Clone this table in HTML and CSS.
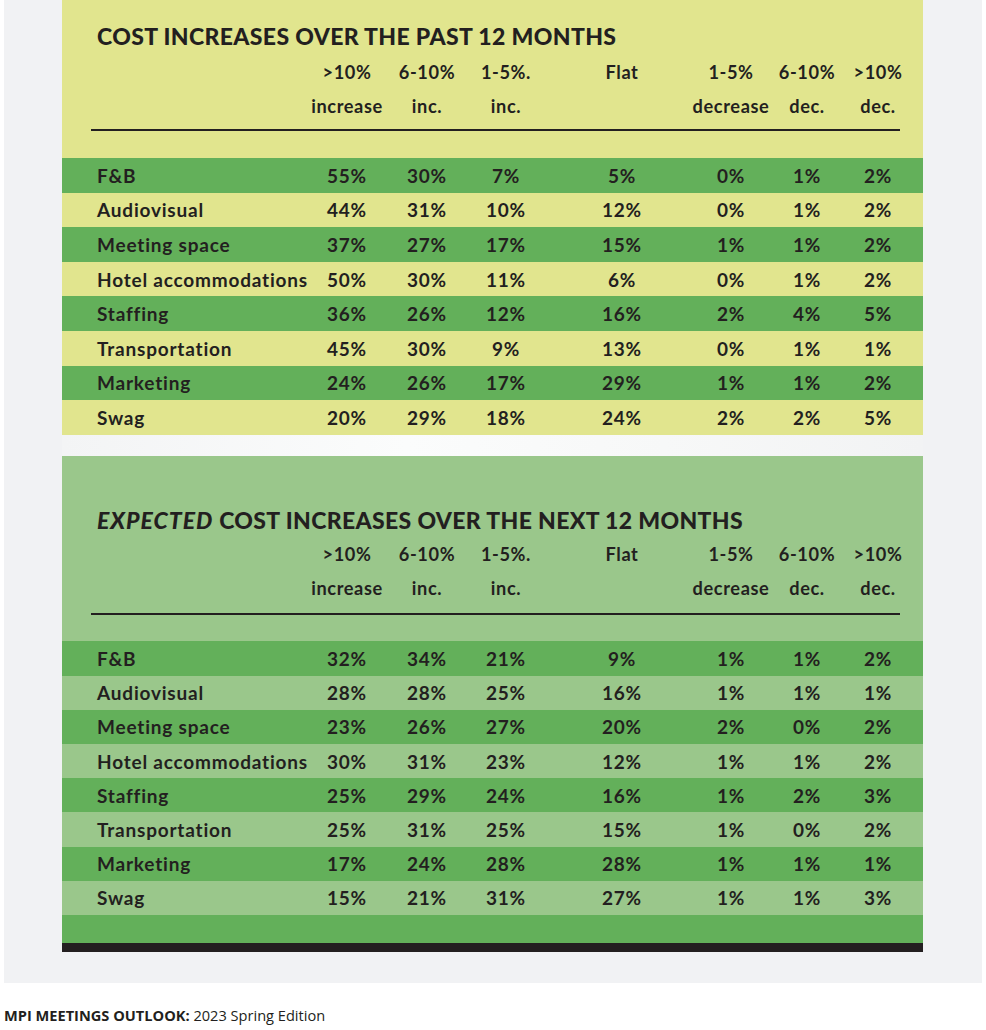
FILE: index.html
```html
<!DOCTYPE html>
<html lang="en">
<head>
<meta charset="utf-8">
<title>MPI Meetings Outlook – Cost increases</title>
<link rel="stylesheet" href="styles.css">
</head>
<body>
<div class="page">
  <div class="figure">
    <section class="panel panel-past">
      <h2 class="title">COST INCREASES OVER THE PAST 12 MONTHS</h2>
      <div class="grid head">
        <div class="cell label"></div>
        <div class="cell"><span>&gt;10%</span><span>increase</span></div>
        <div class="cell"><span>6-10%</span><span>inc.</span></div>
        <div class="cell"><span>1-5%.</span><span>inc.</span></div>
        <div class="cell"><span>Flat</span><span>&nbsp;</span></div>
        <div class="cell"><span>1-5%</span><span>decrease</span></div>
        <div class="cell"><span>6-10%</span><span>dec.</span></div>
        <div class="cell"><span>&gt;10%</span><span>dec.</span></div>
      </div>
      <div class="rule"></div>
      <div class="rows">
        <div class="grid row"><div class="cell label">F&amp;B</div><div class="cell">55%</div><div class="cell">30%</div><div class="cell">7%</div><div class="cell">5%</div><div class="cell">0%</div><div class="cell">1%</div><div class="cell">2%</div></div>
        <div class="grid row"><div class="cell label">Audiovisual</div><div class="cell">44%</div><div class="cell">31%</div><div class="cell">10%</div><div class="cell">12%</div><div class="cell">0%</div><div class="cell">1%</div><div class="cell">2%</div></div>
        <div class="grid row"><div class="cell label">Meeting space</div><div class="cell">37%</div><div class="cell">27%</div><div class="cell">17%</div><div class="cell">15%</div><div class="cell">1%</div><div class="cell">1%</div><div class="cell">2%</div></div>
        <div class="grid row"><div class="cell label">Hotel accommodations</div><div class="cell">50%</div><div class="cell">30%</div><div class="cell">11%</div><div class="cell">6%</div><div class="cell">0%</div><div class="cell">1%</div><div class="cell">2%</div></div>
        <div class="grid row"><div class="cell label">Staffing</div><div class="cell">36%</div><div class="cell">26%</div><div class="cell">12%</div><div class="cell">16%</div><div class="cell">2%</div><div class="cell">4%</div><div class="cell">5%</div></div>
        <div class="grid row"><div class="cell label">Transportation</div><div class="cell">45%</div><div class="cell">30%</div><div class="cell">9%</div><div class="cell">13%</div><div class="cell">0%</div><div class="cell">1%</div><div class="cell">1%</div></div>
        <div class="grid row"><div class="cell label">Marketing</div><div class="cell">24%</div><div class="cell">26%</div><div class="cell">17%</div><div class="cell">29%</div><div class="cell">1%</div><div class="cell">1%</div><div class="cell">2%</div></div>
        <div class="grid row"><div class="cell label">Swag</div><div class="cell">20%</div><div class="cell">29%</div><div class="cell">18%</div><div class="cell">24%</div><div class="cell">2%</div><div class="cell">2%</div><div class="cell">5%</div></div>
      </div>
    </section>
    <div class="gap"></div>
    <section class="panel panel-next">
      <h2 class="title"><em>EXPECTED</em> COST INCREASES OVER THE NEXT 12 MONTHS</h2>
      <div class="grid head">
        <div class="cell label"></div>
        <div class="cell"><span>&gt;10%</span><span>increase</span></div>
        <div class="cell"><span>6-10%</span><span>inc.</span></div>
        <div class="cell"><span>1-5%.</span><span>inc.</span></div>
        <div class="cell"><span>Flat</span><span>&nbsp;</span></div>
        <div class="cell"><span>1-5%</span><span>decrease</span></div>
        <div class="cell"><span>6-10%</span><span>dec.</span></div>
        <div class="cell"><span>&gt;10%</span><span>dec.</span></div>
      </div>
      <div class="rule"></div>
      <div class="rows">
        <div class="grid row"><div class="cell label">F&amp;B</div><div class="cell">32%</div><div class="cell">34%</div><div class="cell">21%</div><div class="cell">9%</div><div class="cell">1%</div><div class="cell">1%</div><div class="cell">2%</div></div>
        <div class="grid row"><div class="cell label">Audiovisual</div><div class="cell">28%</div><div class="cell">28%</div><div class="cell">25%</div><div class="cell">16%</div><div class="cell">1%</div><div class="cell">1%</div><div class="cell">1%</div></div>
        <div class="grid row"><div class="cell label">Meeting space</div><div class="cell">23%</div><div class="cell">26%</div><div class="cell">27%</div><div class="cell">20%</div><div class="cell">2%</div><div class="cell">0%</div><div class="cell">2%</div></div>
        <div class="grid row"><div class="cell label">Hotel accommodations</div><div class="cell">30%</div><div class="cell">31%</div><div class="cell">23%</div><div class="cell">12%</div><div class="cell">1%</div><div class="cell">1%</div><div class="cell">2%</div></div>
        <div class="grid row"><div class="cell label">Staffing</div><div class="cell">25%</div><div class="cell">29%</div><div class="cell">24%</div><div class="cell">16%</div><div class="cell">1%</div><div class="cell">2%</div><div class="cell">3%</div></div>
        <div class="grid row"><div class="cell label">Transportation</div><div class="cell">25%</div><div class="cell">31%</div><div class="cell">25%</div><div class="cell">15%</div><div class="cell">1%</div><div class="cell">0%</div><div class="cell">2%</div></div>
        <div class="grid row"><div class="cell label">Marketing</div><div class="cell">17%</div><div class="cell">24%</div><div class="cell">28%</div><div class="cell">28%</div><div class="cell">1%</div><div class="cell">1%</div><div class="cell">1%</div></div>
        <div class="grid row"><div class="cell label">Swag</div><div class="cell">15%</div><div class="cell">21%</div><div class="cell">31%</div><div class="cell">27%</div><div class="cell">1%</div><div class="cell">1%</div><div class="cell">3%</div></div>
      </div>
      <div class="band"></div>
      <div class="bar"></div>
    </section>
  </div>
</div>
<p class="footer"><b>MPI MEETINGS OUTLOOK:</b> 2023 Spring Edition</p>
</body>
</html>
```

FILE: styles.css
```css
* { box-sizing: border-box; }

body {
  margin: 0;
  background: #ffffff;
  font-family: Lato, "Open Sans", Arial, sans-serif;
  color: #231f20;
}

.page {
  margin-left: 4px;
  width: 978px;
  background: #f1f2f4;
  padding: 0 0 31px 58px;
}

.figure {
  width: 861px;
}

.panel-past {
  background: #e1e58e;
  padding-top: 22px;
}

.panel-next {
  background: #9ac78b;
  padding-top: 50px;
}

.gap {
  height: 21px;
  background: linear-gradient(90deg, #f3f4f5 0%, #fbfcfc 40%, #f7f8f8 70%, #f2f3f4 100%);
}

.title {
  margin: 0 0 0 35px;
  font-size: 23px;
  line-height: 28px;
  font-weight: 900;
  letter-spacing: 0.35px;
  white-space: nowrap;
}

.title em {
  font-style: italic;
  letter-spacing: 1px;
}

.grid {
  display: grid;
  grid-template-columns: 245px 80px 80px 78px 154px 64px 88px 54px;
}

.cell {
  display: flex;
  justify-content: center;
  align-items: center;
  font-size: 19px;
  font-weight: 700;
  letter-spacing: 0.8px;
  white-space: nowrap;
}

.cell.label {
  justify-content: flex-start;
  padding-left: 35px;
}

.head {
  margin-top: 5px;
}

.panel-next .head {
  margin-top: 3px;
}

.head .cell {
  flex-direction: column;
  line-height: 34px;
  font-size: 18.2px;
  letter-spacing: 0.6px;
}

.rule {
  margin: 6px 23px 0 29px;
  height: 2px;
  background: #231f20;
}

.panel-next .rule {
  margin-top: 8px;
}

.rows {
  margin-top: 27px;
}

.panel-next .rows {
  margin-top: 26.7px;
}

.row {
  height: 34.6px;
}

.panel-next .row {
  height: 34.2px;
}

.row:nth-child(odd) {
  background: #63b05a;
}

.band {
  height: 27.6px;
  background: #63b05a;
}

.bar {
  height: 9px;
  background: #231f20;
}

.footer {
  margin: 22px 0 0 4px;
  font-family: "Open Sans", Arial, sans-serif;
  font-size: 14.6px;
  line-height: 20px;
  color: #231f20;
}

.footer b {
  font-weight: 700;
}
```
